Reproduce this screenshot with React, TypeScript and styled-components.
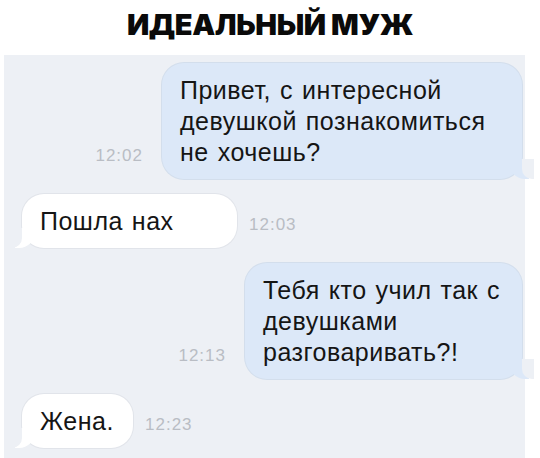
import { FC, ReactNode } from "react";
import styled, { createGlobalStyle } from "styled-components";

const CHAT_BG = "#edf0f5";
const OUT_BG = "#dce8f8";
const IN_BG = "#ffffff";

const GlobalStyle = createGlobalStyle`
  body {
    margin: 0;
    background: #ffffff;
    font-family: "Liberation Sans", Arial, sans-serif;
  }
`;

interface IMessage {
  id: number;
  side: "in" | "out";
  width: number;
  time: string;
  text: ReactNode;
}

const messages: IMessage[] = [
  {
    id: 1,
    side: "out",
    width: 360,
    time: "12:02",
    text: (
      <>
        Привет, с интересной
        <br />
        девушкой познакомиться
        <br />
        не хочешь?
      </>
    ),
  },
  { id: 2, side: "in", width: 215, time: "12:03", text: "Пошла нах" },
  {
    id: 3,
    side: "out",
    width: 277,
    time: "12:13",
    text: (
      <>
        Тебя кто учил так с
        <br />
        девушками
        <br />
        разговаривать?!
      </>
    ),
  },
  { id: 4, side: "in", width: 111, time: "12:23", text: "Жена." },
];

export const App: FC = () => {
  return (
    <Page>
      <GlobalStyle />
      <Title>ИДЕАЛЬНЫЙ МУЖ</Title>

      <Chat>
        {messages.map((message) => (
          <Row key={message.id} $side={message.side}>
            {message.side === "out" && <Time>{message.time}</Time>}
            <Bubble $side={message.side} $width={message.width}>
              {message.text}
            </Bubble>
            {message.side === "in" && <Time>{message.time}</Time>}
          </Row>
        ))}
      </Chat>
    </Page>
  );
};

export default App;

const Page = styled.div`
  width: 540px;
  height: 458px;
  overflow: hidden;
  display: flex;
  flex-direction: column;
  background: #ffffff;
`;

const Title = styled.div`
  height: 55px;
  padding-bottom: 6px;
  box-sizing: border-box;
  display: flex;
  align-items: center;
  justify-content: center;

  font-family: Inter, "DejaVu Sans", sans-serif;
  font-size: 29px;
  font-weight: 900;
  letter-spacing: -0.4px;
  color: #0a0a0a;
`;

const Chat = styled.div`
  flex: 1;
  display: flex;
  flex-direction: column;
  row-gap: 15px;
  margin: 0 15px 0 4px;
  padding: 8px 3px 0 18px;

  background: ${CHAT_BG};
`;

const Row = styled.div<{ $side: "in" | "out" }>`
  display: flex;
  justify-content: ${({ $side }) => ($side === "out" ? "flex-end" : "flex-start")};
  align-items: last baseline;
  column-gap: ${({ $side }) => ($side === "out" ? "19px" : "12px")};
`;

const Time = styled.span`
  font-size: 17px;
  letter-spacing: 1px;
  color: #b9bdc4;
`;

const Bubble = styled.div<{ $side: "in" | "out"; $width: number }>`
  position: relative;
  box-sizing: border-box;
  width: ${({ $width }) => $width}px;
  padding: 12px 18px 11px;

  font-size: 25px;
  line-height: 31px;
  letter-spacing: 0.5px;
  word-spacing: 1.5px;
  white-space: nowrap;
  color: #151515;

  background: ${({ $side }) => ($side === "out" ? OUT_BG : IN_BG)};
  border-radius: 22px;
  box-shadow: 0 0 0 1px
    ${({ $side }) => ($side === "out" ? "#d3deec" : "#e1e4ea")};

  /* little tail in the bottom corner */
  &::before {
    content: "";
    position: absolute;
    bottom: 0;
    ${({ $side }) => ($side === "out" ? "right: -7px;" : "left: -7px;")}
    width: 20px;
    height: 20px;
    background: ${({ $side }) => ($side === "out" ? OUT_BG : IN_BG)};
    ${({ $side }) =>
      $side === "out"
        ? "border-bottom-left-radius: 16px;"
        : "border-bottom-right-radius: 16px;"}
  }

  &::after {
    content: "";
    position: absolute;
    bottom: 0;
    ${({ $side }) => ($side === "out" ? "right: -12px;" : "left: -12px;")}
    width: 12px;
    height: 20px;
    background: ${CHAT_BG};
    ${({ $side }) =>
      $side === "out"
        ? "border-bottom-left-radius: 10px;"
        : "border-bottom-right-radius: 10px;"}
  }
`;
